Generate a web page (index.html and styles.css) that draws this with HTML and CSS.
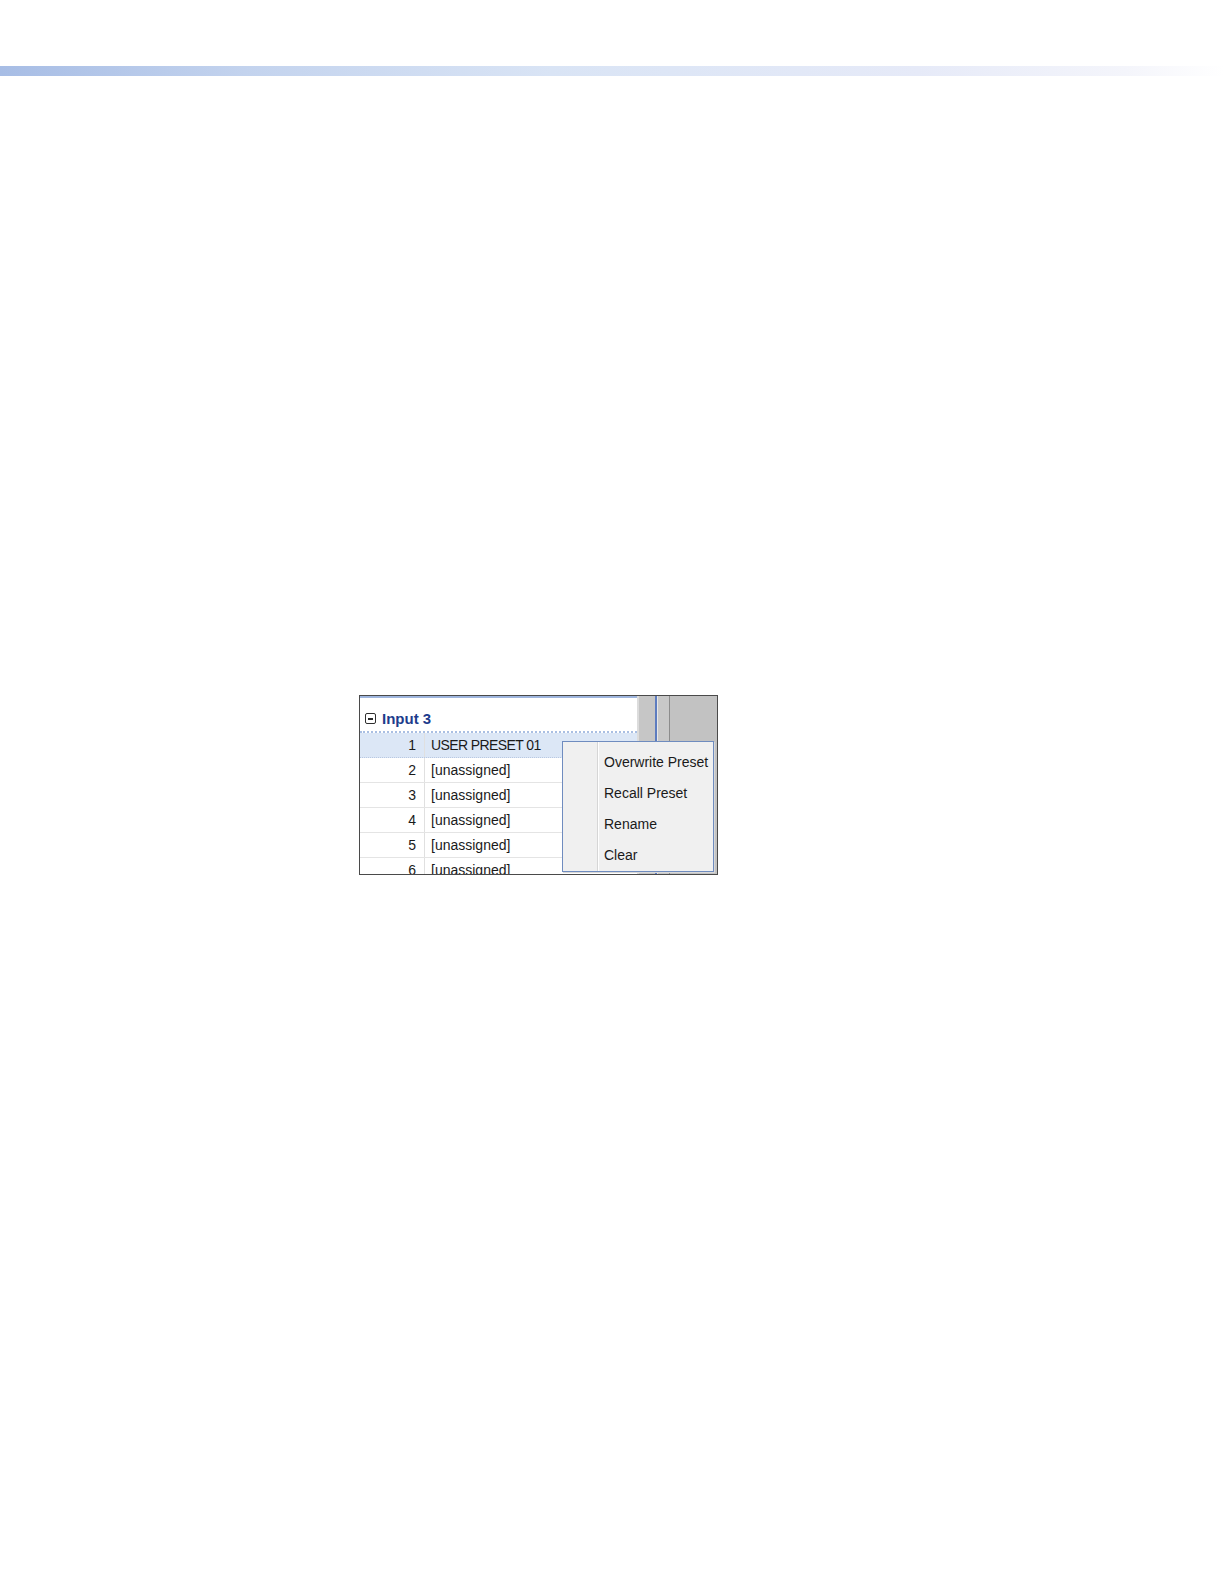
FILE: index.html
```html
<!DOCTYPE html>
<html>
<head>
<meta charset="utf-8">
<link rel="stylesheet" href="styles.css">
</head>
<body>
<div class="topbar"></div>
<div class="shot">
  <div class="panel">
    <div class="panel-top"></div>
    <div class="group-head">
      <span class="toggle"><span class="minus"></span></span>
      <span class="group-title">Input 3</span>
    </div>
    <div class="rows">
      <div class="row selected"><span class="num">1</span><span class="name caps">USER PRESET 01</span></div>
      <div class="row"><span class="num">2</span><span class="name">[unassigned]</span></div>
      <div class="row"><span class="num">3</span><span class="name">[unassigned]</span></div>
      <div class="row"><span class="num">4</span><span class="name">[unassigned]</span></div>
      <div class="row"><span class="num">5</span><span class="name">[unassigned]</span></div>
      <div class="row"><span class="num">6</span><span class="name">[unassigned]</span></div>
    </div>
  </div>
  <div class="strip">
    <div class="s1"></div>
    <div class="s2"></div>
    <div class="s3"></div>
    <div class="s4"></div>
    <div class="s5"></div>
    <div class="s6"></div>
  </div>
  <div class="menu">
    <div class="menu-item">Overwrite Preset</div>
    <div class="menu-item">Recall Preset</div>
    <div class="menu-item">Rename</div>
    <div class="menu-item">Clear</div>
  </div>
</div>
</body>
</html>
```
FILE: styles.css
```css
html, body {
  margin: 0;
  padding: 0;
  background: #ffffff;
}
body {
  font-family: "Liberation Sans", Arial, sans-serif;
  width: 1224px;
  height: 1584px;
  overflow: hidden;
}
.topbar {
  margin-top: 66px;
  height: 10px;
  background: linear-gradient(to right, #a7bde5 0%, #c3d3ee 20%, #d9e4f5 45%, #e6eaf8 75%, #f4f5fb 92%, #ffffff 100%);
}
.shot {
  position: relative;
  margin-top: 619px;
  margin-left: 359px;
  width: 357px;
  height: 178px;
  border: 1px solid #4a4a4a;
  display: flex;
  overflow: hidden;
  background: #ffffff;
}
.panel {
  width: 277px;
  display: flex;
  flex-direction: column;
}
.panel-top {
  height: 2px;
  background: #9fb6de;
  flex: none;
}
.group-head {
  height: 35px;
  border-bottom: 2px dotted #a9bfe3;
  display: flex;
  align-items: center;
  padding-left: 5px;
  padding-top: 8px;
  box-sizing: border-box;
  flex: none;
}
.toggle {
  width: 9px;
  height: 9px;
  border: 1px solid #2f2f2f;
  border-radius: 2px;
  display: flex;
  align-items: center;
  justify-content: center;
  margin-right: 6px;
}
.minus {
  width: 5px;
  height: 2px;
  background: #2a2a2a;
}
.group-title {
  font-weight: bold;
  font-size: 15px;
  color: #1d3c8c;
}
.rows {
  display: flex;
  flex-direction: column;
}
.row {
  height: 25px;
  box-sizing: border-box;
  display: flex;
  align-items: center;
  border-bottom: 1px solid #e4e4e4;
  font-size: 14px;
  color: #1a1a1a;
  flex: none;
}
.row.selected {
  background: #dce7f6;
  border-bottom: 1px dotted #b8c8e2;
}
.num {
  width: 56px;
  text-align: right;
  padding-right: 8px;
  border-right: 1px solid #e0e0e0;
  align-self: stretch;
  display: flex;
  align-items: center;
  justify-content: flex-end;
}
.name {
  padding-left: 6px;
}
.caps {
  letter-spacing: -0.6px;
}
.strip {
  display: flex;
  flex: 1;
}
.s1 { width: 2px; background: #dcdcdc; }
.s2 { width: 16px; background: #c6c6c6; }
.s3 { width: 2px; background: #5d7cbf; }
.s4 { width: 11px; background: #c8c8c8; border-left: 1px solid #e6e6e6; }
.s5 { width: 1px; background: #8c8c8c; }
.s6 { flex: 1; background: #c2c2c2; }
.menu {
  position: absolute;
  left: 202px;
  top: 45px;
  width: 150px;
  height: 124px;
  border: 1px solid #6f8cbf;
  background: linear-gradient(to right, #f0f0f0 0px, #f0f0f0 34px, #d6d6d6 34px, #d6d6d6 35px, #ffffff 35px, #ffffff 36px, #f0f0f0 36px);
  padding-top: 5px;
  box-sizing: content-box;
  box-shadow: 1px 1px 0 #d8d8d8;
}
.menu-item {
  height: 31px;
  line-height: 31px;
  padding-left: 41px;
  font-size: 14px;
  color: #1a1a1a;
  white-space: nowrap;
}
```
